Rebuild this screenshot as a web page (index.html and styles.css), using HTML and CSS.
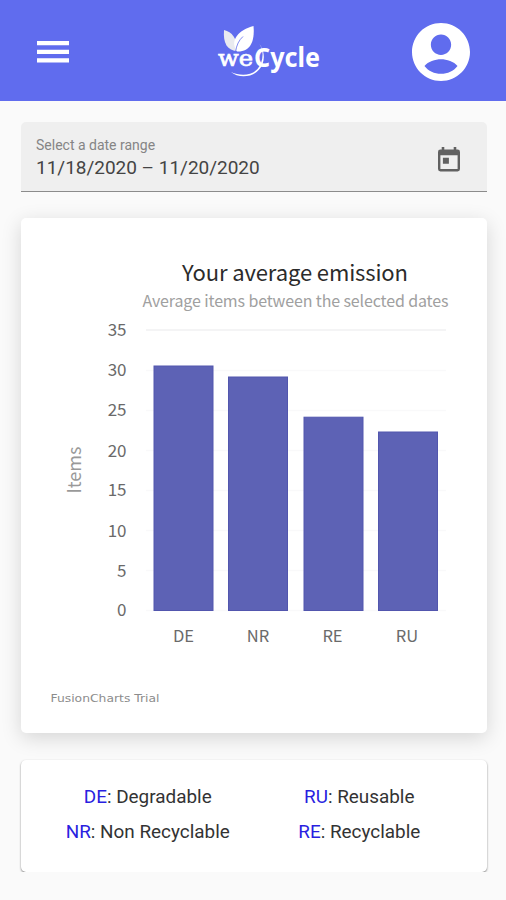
FILE: index.html
```
<!DOCTYPE html>
<html lang="en">
<head>
    <meta charset="UTF-8">
    <meta name="viewport" content="width=device-width, initial-scale=1.0">
    <title>weCycle</title>
    <link rel="stylesheet" href="styles.css">
</head>
<body>

    <!-- Top bar -->
    <header class="navbar">
        <svg class="menu-icon" viewBox="0 0 32 22">
            <path d="M0 0h32v4.2H0zM0 8.7h32v4.2H0zM0 17.3h32v4.2H0z"/>
        </svg>

        <svg class="logo" viewBox="0 0 112 60">
            <path class="leaf-left" d="M9 8C17 10 22 16 23 29C12 29 8 21 9 8z"/>
            <path class="leaf-right" d="M38.500 4C40 20 35 30 22 29.500C14 18 24 8 38.500 4z"/>
            <path class="leaf-vein" d="M20.500 30C21.500 23 24 18 28 14.500"/>
            <path class="swoosh" d="M16 50C25 54 36 54 42.500 47C47 42 49 33 46.500 26C45 22 42.500 20 42.500 20C47 24 51 33 47.500 42C42 56 24 57 16 50z"/>
            <text class="logo-we" x="3" y="44" textLength="35" lengthAdjust="spacingAndGlyphs">we</text>
            <text class="logo-cycle" x="39" y="45.200" textLength="66" lengthAdjust="spacingAndGlyphs">Cycle</text>
        </svg>

        <svg class="avatar" viewBox="2 2 20 20">
            <path d="M12 2C6.480 2 2 6.480 2 12s4.480 10 10 10 10-4.480 10-10S17.520 2 12 2zm0 4c1.930 0 3.500 1.570 3.500 3.500S13.930 13 12 13s-3.500-1.570-3.500-3.500S10.070 6 12 6zm0 13.500c-2.330 0-4.320-.9-5.700-2.700C7.500 15.300 10 14.500 12 14.500s4.500.8 5.700 2.300c-1.380 1.800-3.370 2.700-5.700 2.700z"/>
        </svg>
    </header>

    <main class="content">
        <!-- Date range field -->
        <div class="date-field">
            <div>
                <div class="date-label">Select a date range</div>
                <div class="date-value">11/18/2020 – 11/20/2020</div>
            </div>
            <svg class="calendar-icon" viewBox="0 0 22 25">
                <path d="M19.600 2.500h-1.300V0h-2.600v2.500H6.300V0H3.700v2.500H2.400A2.400 2.400 0 0 0 0 4.900v17.200a2.400 2.400 0 0 0 2.400 2.400h17.200a2.400 2.400 0 0 0 2.400-2.400V4.900a2.400 2.400 0 0 0-2.400-2.400zm0 19.600H2.400V8.300h17.200zM4.900 10.800h6v6h-6z"/>
            </svg>
        </div>

        <!-- Emission chart -->
        <div class="card chart-card">
            <svg class="chart" viewBox="0 0 466 515">
                <text class="chart-title" x="274" y="63" textLength="226">Your average emission</text>
                <text class="chart-subtitle" x="274.500" y="89" textLength="306">Average items between the selected dates</text>

                <path class="grid-top" d="M125 112H425"/>
                <path class="grid-lines" d="M125 152.500H425M125 192.500H425M125 232.500H425M125 272.500H425M125 312.500H425M125 352.500H425M125 392.500H425"/>

                <g class="tick y-tick">
                    <text x="105.500" y="117.500">35</text>
                    <text x="105.500" y="158">30</text>
                    <text x="105.500" y="198">25</text>
                    <text x="105.500" y="238.500">20</text>
                    <text x="105.500" y="278">15</text>
                    <text x="105.500" y="318.500">10</text>
                    <text x="105.500" y="359">5</text>
                    <text x="105.500" y="398">0</text>
                </g>

                <g class="bars">
                    <rect x="133" y="148" width="59" height="244.500"/>
                    <rect x="207.500" y="159" width="59" height="233.500"/>
                    <rect x="283" y="199.200" width="59" height="193.300"/>
                    <rect x="357.500" y="214" width="59" height="178.500"/>
                </g>

                <g class="tick x-tick">
                    <text x="162.500" y="423.500">DE</text>
                    <text x="237" y="423.500">NR</text>
                    <text x="311.500" y="423.500">RE</text>
                    <text x="386" y="423.500">RU</text>
                </g>

                <text class="axis-name" transform="translate(60 252) rotate(-90)" textLength="47">Items</text>
                <text class="credit" x="29.500" y="484" textLength="109" lengthAdjust="spacingAndGlyphs">FusionCharts Trial</text>
            </svg>
        </div>

        <!-- Legend -->
        <div class="card legend">
            <div class="legend-column">
                <p><span>DE</span>: Degradable</p>
                <p><span>NR</span>: Non Recyclable</p>
            </div>
            <div class="legend-column">
                <p><span>RU</span>: Reusable</p>
                <p><span>RE</span>: Recyclable</p>
            </div>
        </div>
    </main>

</body>
</html>
```
FILE: styles.css
```
body {
    font-family: Roboto, sans-serif;
    margin: 0;
    background-color: #fafafa;
}

.navbar {
    box-sizing: border-box;
    height: 101px;
    padding: 2px 36px 0 37px;
    display: flex;
    align-items: center;
    justify-content: space-between;
    background-color: #606cee;
}

.menu-icon {
    width: 32px;
    height: 22px;
    fill: #fff;
}

.logo {
    width: 112px;
    height: 60px;
    margin-left: 60px;
}

.leaf-left {
    fill: #e9eaf0;
}

.leaf-right,
.swoosh {
    fill: #fff;
}

.leaf-vein {
    fill: none;
    stroke: #606cee;
    stroke-width: 0.8;
}

.logo-we {
    font: 22px "DejaVu Serif", serif;
    fill: #fff;
    stroke: #fff;
    stroke-width: 0.7;
}

.logo-cycle {
    font: bold 26px "Noto Sans", sans-serif;
    fill: #fff;
}

.avatar {
    width: 58px;
    height: 58px;
    fill: #fff;
}

.content {
    padding: 21px 19px 0 21px;
}

.date-field {
    box-sizing: border-box;
    height: 70px;
    padding: 0 27px 0 15px;
    display: flex;
    align-items: center;
    justify-content: space-between;
    background-color: #efefef;
    border-bottom: 1px solid #8c8c8c;
    border-radius: 5px 5px 0 0;
}

.date-label {
    margin-top: 4px;
    font-size: 14px;
    line-height: 18px;
    color: #858585;
}

.date-value {
    font-size: 19px;
    line-height: 28px;
    letter-spacing: -0.02px;
    color: #444;
}

.calendar-icon {
    width: 22px;
    height: 25px;
    margin-top: 5px;
    fill: #616161;
}

.card {
    background-color: #fff;
    border-radius: 5px;
}

.chart-card {
    height: 515px;
    margin-top: 26px;
    box-shadow: 0 5px 20px rgba(0, 0, 0, 0.15);
}

/* Chart */
.chart {
    display: block;
    width: 466px;
    height: 515px;
    font-family: "Noto Sans CJK SC", sans-serif;
}

.chart text {
    text-anchor: middle;
}

.chart .chart-title {
    font-size: 22px;
    fill: #2b2b2b;
}

.chart .chart-subtitle {
    font-size: 16px;
    fill: #a0a0a0;
}

.grid-top,
.grid-lines {
    stroke: #f4f4f5;
    stroke-width: 2;
}

.grid-lines {
    stroke: #f9f9fa;
    stroke-width: 1.5;
}

.tick {
    font-size: 17px;
    fill: #6a6a6a;
}

.chart .y-tick text {
    text-anchor: end;
}

.x-tick {
    font-size: 16.5px;
}

.bars rect {
    fill: #5d62b5;
    stroke: #5256ae;
    stroke-width: 1;
}

.axis-name {
    font-size: 18px;
    fill: #999;
}

.chart .credit {
    font-family: "DejaVu Sans", Verdana, sans-serif;
    font-size: 11px;
    text-anchor: start;
    fill: #8c8c8c;
}

/* Legend */
.legend {
    box-sizing: border-box;
    height: 112px;
    margin-top: 27px;
    padding: 19px 22px 0 21px;
    display: flex;
    box-shadow: 0 1px 2px rgba(0, 0, 0, 0.5);
}

.legend-column {
    flex: 1;
    text-align: center;
}

.legend p {
    margin: 0;
    font-size: 18.9px;
    line-height: 35px;
    color: #333;
}

.legend span {
    color: #2a1fe0;
}
```
